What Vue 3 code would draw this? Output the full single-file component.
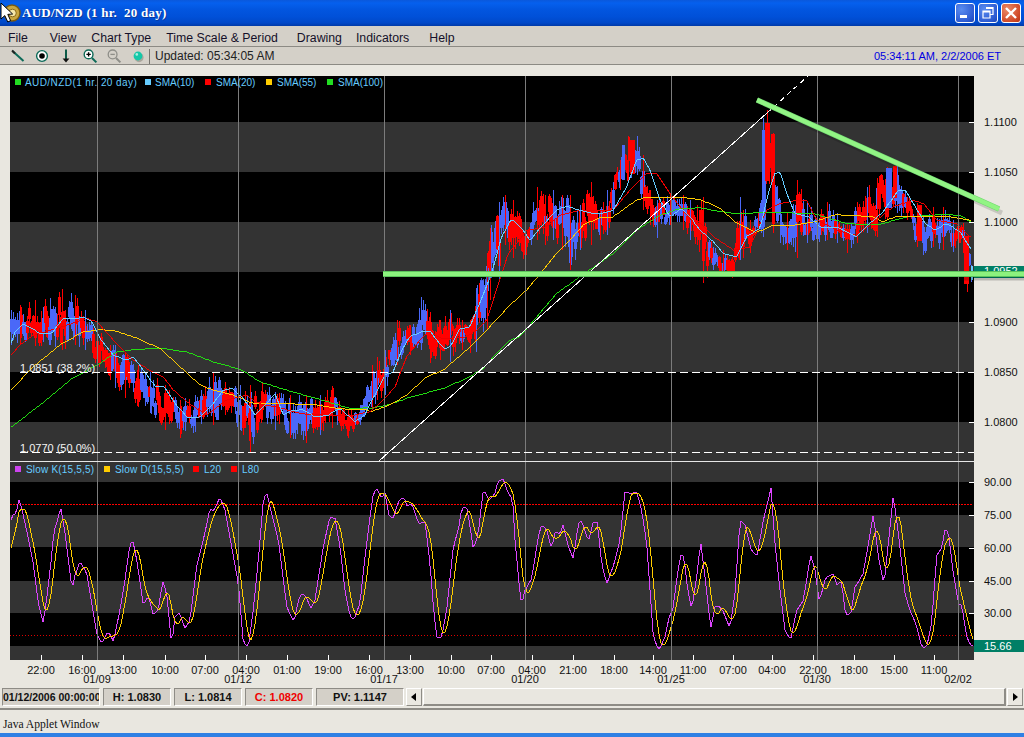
<script setup>
function seg(ox, oy, pts, xmin = -1e9, xmax = 1e9) {
  const out = []
  for (let i = 0; i < pts.length; i += 2) {
    const x = ox + pts[i] / 3
    if (x >= xmin && x <= xmax) out.push([x, oy + pts[i + 1] / 3])
  }
  return out
}
function interp(pts, x) {
  if (x <= pts[0][0]) return pts[0][1]
  for (let i = 1; i < pts.length; i++) {
    if (x <= pts[i][0]) {
      const [a, b] = pts[i - 1]
      const [c, d] = pts[i]
      return b + ((d - b) * (x - a)) / (c - a || 1)
    }
  }
  return pts[pts.length - 1][1]
}
function line(pts, from = 11, to = 972, step = 2) {
  const out = []
  for (let x = from; x <= to; x += step) out.push(x + ',' + Math.round(interp(pts, x)))
  return out.join(' ')
}

const titleText = 'AUD/NZD (1 hr.\u00a0\u00a020 day)'

const sma10 = [
  ...seg(0, 300, [33,130,45,95,68,72,95,85,120,100,155,100,190,55,250,52,275,65,300,115,340,165,380,180,400,170,430,210,465,258,490,258,525,310,560,350,600,350,640,310,670,270,695,265,730,295,765,345,790,320,825,282,850,345,880,330,905,328,945,350,985,345,1020,325,1065,365,1095,345]),
  ...seg(370, 300, [0,310,20,275,45,225,70,215,95,150,120,110,160,92,180,92,200,120,225,147,245,135,270,85,300,80]),
  ...seg(380, 130, [335,430,365,320,395,265,425,295,450,330,480,295,530,240,560,228,600,240,640,250,665,250,700,240,740,170,770,90,790,85,810,120,840,210,870,260,905,235,940,270]),
  ...seg(680, 80, [0,385,20,400,60,450,100,485,130,520,170,530,200,470,240,445,265,340,285,280,300,275,320,340,345,400,385,410,420,440,470,440,530,470,570,430,610,395,655,330,675,330,700,370,735,430,765,450,800,430,840,455,875,510])
]
const sma20 = [
  ...seg(0, 300, [33,165,60,135,100,105,150,90,200,75,260,55,290,65,340,120,400,180,440,205,490,230,520,270,560,305,620,345,680,300,740,285,775,310,830,320,900,340,1000,345,1060,345,1100,335]),
  ...seg(370, 300, [0,335,40,300,75,260,110,170,150,120,175,95,215,115,290,110,320,90,350,60]),
  ...seg(380, 130, [385,370,410,340,440,300,500,290,540,255,600,240,700,240,750,180,800,130,830,130,870,190,900,230,950,290]),
  ...seg(680, 80, [50,420,100,470,160,510,210,500,260,390,300,370,350,360,380,360,410,420,470,450,530,465,590,420,640,380,700,360,730,370,770,420,830,430,870,470])
]
const sma55 = [
  ...seg(0, 300, [33,270,100,200,180,135,250,95,300,88,340,90,400,110,480,145,540,200,600,255,640,270,700,285,760,310,860,310,940,312,1020,325,1100,328]),
  ...seg(370, 300, [0,335,60,315,110,285,170,230,220,210,290,150,350,90,420,15]),
  ...seg(380, 130, [440,480,490,420,530,370,570,330,610,285,660,262,700,260,770,210,800,200,880,200,890,203]),
  ...seg(680, 80, [0,350,60,358,120,385,170,430,230,457,280,435,340,435,400,425,470,403,570,408,610,425,650,408,800,408,870,420])
]
const sma100 = [
  ...seg(0, 300, [33,382,120,315,210,240,300,190,350,155,400,148,480,143,560,155,640,185,720,207,780,245,860,270,950,295,1050,325,1100,322]),
  ...seg(370, 300, [0,325,60,312,130,288,220,265,290,235,340,205,380,160,420,120,450,110]),
  ...seg(380, 130, [530,490,600,440,700,370,770,300,840,255,900,235,960,232]),
  ...seg(680, 80, [100,390,170,400,270,395,400,400,500,430,600,432,680,410,790,402,840,405,870,425])
]

const slowKPts = [
  ...seg(0, 460, [33,180,38,165,48,160,58,115,66,150,80,210,100,310,115,430,130,490,142,400,155,290,162,210,170,190,182,142,195,220,205,300,216,388,225,345,240,305,260,340,275,430,290,520,305,550,320,520,330,520,340,545,360,450,375,360,390,250,400,245,415,330,430,435,445,405,460,465,475,450,488,362,500,400,515,555,525,470,538,458,555,505,570,480,590,320,610,240,630,145,640,155,660,112,675,150,695,260,715,370,730,550,745,560,760,450,775,300,790,120,800,97,815,160,835,240,860,440,882,488,895,420,905,400,918,410,932,445,945,420,970,260,990,170]),
  ...seg(330, 460, [15,175,30,260,45,390,60,470,72,478,90,430,105,290,120,170,130,100,140,85,155,115,165,100,178,170,190,175,205,125,215,115,222,112,232,140,245,130,265,190,285,185,300,310,310,440,320,530,335,530,350,450,370,260,385,210,395,145,410,140,422,210,430,270,445,220,458,100,468,95,475,122,495,100,503,65,520,58,535,100,548,120,555,240,570,400,575,435,585,390,605,355,625,230,635,195,650,210,665,265,677,210,690,225,698,190,715,260,730,295,745,190,755,182,775,245,790,185,802,185,815,310,830,370,850,320,870,240,885,95,905,100,920,95,935,150,950,250,970,530,985,570]),
  ...seg(660, 460, [0,565,15,530,25,480,40,440,50,360,62,285,72,290,82,380,95,450,110,350,122,245,135,350,152,505,165,440,175,435,190,455,210,505,225,400,240,180,255,195,275,275,292,285,310,180,333,85,345,250,360,390,375,510,392,540,410,450,430,420,452,285,465,330,478,425,497,352,520,340,530,375,545,365,557,468,575,455,583,385,610,340,640,162,655,290,672,375,700,105,715,220,735,400,750,450,770,500,785,560,800,560,815,490,830,285,845,265,855,210,865,215,880,340,895,430,905,435,920,530,932,555,940,556])
]
const kYs = []
for (let x = 11; x <= 973; x += 2) kYs.push(Math.round(interp(slowKPts, x)))
const slowK = kYs.map((y, i) => 11 + i * 2 + ',' + y).join(' ')
const slowD = kYs
  .map((_, i) => {
    let s = 0
    for (let j = 0; j < 5; j++) s += i - j >= 0 ? kYs[i - j] : 555
    return 11 + i * 2 + ',' + Math.round(s / 5)
  })
  .join(' ')

const env = [
  [11,310,345],[20,305,345],[35,300,346],[50,298,345],[62,289,350],[75,295,345],[85,310,350],[97,325,365],[110,345,380],[115,345,388],[125,352,398],[138,365,407],[150,372,413],[165,385,430],[180,400,438],[195,395,432],[213,372,425],[225,382,415],[240,385,430],[250,385,452],[262,382,420],[275,392,430],[290,395,438],[306,395,443],[320,395,435],[332,386,428],[348,410,438],[360,405,425],[372,365,410],[377,357,400],[385,350,395],[397,320,365],[410,325,355],[421,297,350],[430,312,363],[440,320,360],[450,310,362],[462,320,350],[470,320,353],[476,288,352],[487,253,330],[490,228,300],[499,202,280],[505,195,245],[513,200,258],[525,225,262],[537,187,240],[545,195,245],[553,190,240],[562,195,250],[570,195,270],[580,205,250],[591,182,245],[600,210,240],[607,190,235],[620,160,190],[628,136,180],[637,136,175],[643,155,210],[650,190,225],[657,200,238],[670,195,225],[683,195,230],[690,200,240],[697,205,245],[703,197,283],[713,247,270],[723,250,277],[732,257,278],[740,197,260],[750,220,253],[758,213,230],[763,118,237],[767,110,180],[773,133,233],[780,200,243],[787,213,250],[797,180,258],[807,203,243],[817,213,250],[827,202,240],[837,213,243],[847,223,253],[857,202,243],[867,187,233],[877,178,237],[887,167,220],[897,165,213],[907,197,220],[917,203,247],[923,217,255],[933,207,247],[943,207,250],[953,220,252],[963,223,253],[967,240,292],[971,265,282]
]
const topPts = env.map((e) => [e[0], e[1]])
const botPts = env.map((e) => [e[0], e[2]])

let seed = 20060202
function rnd() {
  seed = (seed + 0x6d2b79f5) | 0
  let t = Math.imul(seed ^ (seed >>> 15), 1 | seed)
  t = (t + Math.imul(t ^ (t >>> 7), 61 | t)) ^ t
  return ((t ^ (t >>> 14)) >>> 0) / 4294967296
}
const BLUE = '#4a68f8'
const RED = '#ff0000'
const bars = []
let runCol = BLUE
for (let x = 11; x <= 971; x += 2) {
  const t = interp(topPts, x)
  const b = interp(botPts, x)
  const r = b - t
  if (rnd() < 0.3) runCol = runCol === RED ? BLUE : RED
  const mid = t + r * (0.28 + rnd() * 0.44)
  const c1 = mid - r * (0.06 + rnd() * 0.2)
  const c2 = mid + r * (0.06 + rnd() * 0.2)
  const hi = Math.max(t, c1 - r * rnd() * 0.25)
  const lo = Math.min(b, c2 + r * rnd() * 0.25)
  bars.push({ x, hi: Math.round(hi), lo: Math.round(lo), y: Math.round(c1), h: Math.max(2, Math.round(c2 - c1)), col: runCol })
}
const spikes = env.map((e, i) => ({ x: e[0], t: e[1], b: e[2], col: i % 3 ? RED : BLUE }))
// the prominent bars of the reference, placed by hand over the generated ones
const heavy = [
  { x: 762, w: 4, y: 130, h: 90, c: BLUE },
  { x: 765, w: 5, y: 123, h: 58, c: RED },
  { x: 772, w: 3, y: 134, h: 90, c: RED },
  { x: 622, w: 3, y: 145, h: 35, c: BLUE },
  { x: 630, w: 5, y: 140, h: 34, c: RED },
  { x: 886, w: 6, y: 168, h: 40, c: BLUE },
  { x: 893, w: 4, y: 166, h: 32, c: RED },
  { x: 918, w: 4, y: 205, h: 36, c: RED },
  { x: 964, w: 5, y: 236, h: 48, c: RED },
  { x: 971, w: 2, y: 266, h: 14, c: '#66ccff' }
]

const priceBands = [122, 222, 322, 422].map((y) => ({ y, h: Math.min(50, 461 - y) }))
const oscBands = [
  [462, 20],
  [515, 32],
  [581, 32],
  [646, 14]
]
const vlines = [97, 238, 384, 525, 671, 817, 958]
const priceLabels = [
  ['1.1100', 122],
  ['1.1050', 172],
  ['1.1000', 222],
  ['1.0900', 322],
  ['1.0850', 372],
  ['1.0800', 422]
]
const oscLabels = [
  ['90.00', 482],
  ['75.00', 515],
  ['60.00', 548],
  ['45.00', 581],
  ['30.00', 613]
]
const times = [
  ['22:00', 41],['16:00', 82],['13:00', 123],['10:00', 165],['07:00', 205],['04:00', 246],['01:00', 287],['19:00', 328],['16:00', 369],['13:00', 410],['10:00', 451],['07:00', 491],['04:00', 532],['21:00', 573],['18:00', 614],['14:00', 653],['11:00', 693],['07:00', 733],['04:00', 772],['22:00', 813],['18:00', 854],['15:00', 894],['11:00', 934]
]
const dates = [
  ['01/09', 97],['01/12', 238],['01/17', 384],['01/20', 525],['01/25', 671],['01/30', 817],['02/02', 958]
]
const legend = [
  { x: 15, c: '#22dd22', t: 'AUD/NZD(1 hr. 20 day)', tx: 25, wide: true },
  { x: 145, c: '#66ccff', t: 'SMA(10)', tx: 155 },
  { x: 205, c: '#ff0000', t: 'SMA(20)', tx: 216 },
  { x: 266, c: '#ffcc00', t: 'SMA(55)', tx: 277 },
  { x: 327, c: '#22dd22', t: 'SMA(100)', tx: 338 }
]
const oscLegend = [
  { x: 15, c: '#cc44ee', t: 'Slow K(15,5,5)', tx: 26 },
  { x: 104, c: '#ffcc00', t: 'Slow D(15,5,5)', tx: 115 },
  { x: 193, c: '#ff0000', t: 'L20', tx: 204 },
  { x: 231, c: '#ff0000', t: 'L80', tx: 242 }
]
const menus = ['File', 'View', 'Chart Type', 'Time Scale & Period', 'Drawing', 'Indicators', 'Help']
const cells = [
  { t: '01/12/2006 00:00:00', k: 'date' },
  { t: 'H: 1.0830', k: '' },
  { t: 'L: 1.0814', k: '' },
  { t: 'C: 1.0820', k: 'red' },
  { t: 'PV: 1.1147', k: 'pv' }
]
</script>

<template>
  <div class="win">
    <header class="title">
      <svg class="logo" width="22" height="24" viewBox="0 0 22 24">
        <circle cx="12" cy="12" r="8" fill="#c9a640" stroke="#7a5a10" stroke-width="1.5" />
        <circle cx="12.5" cy="12" r="3.8" fill="#f4e6a8" stroke="#8a6a18" />
        <path d="M1 2 L1 18 L4.8 14.6 L7.8 21 L10.6 19.6 L7.8 13.4 L12.6 13 Z" fill="#fff" stroke="#000" stroke-width="1" />
      </svg>
      <span class="title-text">{{ titleText }}</span>
      <div class="winbtns">
        <button class="wb"><svg width="18" height="18" viewBox="0 0 18 18"><rect x="4" y="11" width="7" height="3" fill="#fff" /></svg></button>
        <button class="wb"><svg width="18" height="18" viewBox="0 0 18 18"><path d="M7 3.5h7v7h-3M4 7h7v7H4z M4 7.8h7 M7 4.4h7" fill="none" stroke="#fff" stroke-width="1.2" /></svg></button>
        <button class="wb close"><svg width="18" height="18" viewBox="0 0 18 18"><path d="M4 4 L14 14 M14 4 L4 14" stroke="#fff" stroke-width="2.4" /></svg></button>
      </div>
    </header>

    <nav class="menu">
      <span v-for="m in menus" :key="m" class="mi">{{ m }}</span>
    </nav>

    <div class="tools">
      <span class="tb"><svg width="16" height="16" viewBox="0 0 16 16"><path d="M2.5 3 L13.5 13" stroke="#0c6a58" stroke-width="2" /><path d="M2 2.6 L5 5.4" stroke="#222" stroke-width="2" /></svg></span>
      <span class="tb"><svg width="16" height="16" viewBox="0 0 16 16"><circle cx="8" cy="8" r="5.4" fill="#fff" stroke="#0c6a58" stroke-width="1.4" /><circle cx="8" cy="8" r="2.8" fill="#000" /></svg></span>
      <span class="tb"><svg width="16" height="16" viewBox="0 0 16 16"><path d="M8 1.5V11" stroke="#0c5a48" stroke-width="2" /><path d="M4.6 10.5h6.8L8 14.6z" fill="#111" /></svg></span>
      <span class="tb"><svg width="16" height="16" viewBox="0 0 16 16"><circle cx="6.6" cy="6.4" r="4.4" fill="#fff" stroke="#0c6a58" stroke-width="1.4" /><path d="M4.4 6.4h4.4M6.6 4.2v4.4" stroke="#000" stroke-width="1.4" /><path d="M10 10 L14.4 14.4" stroke="#0c6a58" stroke-width="2" /></svg></span>
      <span class="tb"><svg width="16" height="16" viewBox="0 0 16 16"><circle cx="6.6" cy="6.4" r="4.4" fill="none" stroke="#8e8e88" stroke-width="1.3" /><path d="M4.4 6.4h4.4" stroke="#8e8e88" stroke-width="1.3" /><path d="M10 10 L14.4 14.4" stroke="#8e8e88" stroke-width="2" /></svg></span>
      <span class="tb"><svg width="16" height="16" viewBox="0 0 16 16"><circle cx="9" cy="9.6" r="4.6" fill="#aaa69c" /><circle cx="8" cy="8" r="4.4" fill="#14c8a8" /><circle cx="6.8" cy="6.4" r="1.3" fill="#a8f0e0" /></svg></span>
      <span class="tsep"></span>
      <span class="updated">Updated: 05:34:05 AM</span>
      <span class="clock">05:34:11 AM, 2/2/2006 ET</span>
    </div>

    <svg class="chart" width="1024" height="623" viewBox="0 65 1024 623">
      <rect x="0" y="65" width="1024" height="623" fill="#e9e7e0" />
      <g shape-rendering="crispEdges">
        <rect x="10" y="76" width="964" height="584" fill="#000" />
        <rect v-for="b in priceBands" :key="b.y" x="10" :y="b.y" width="964" :height="b.h" fill="#333" />
        <rect v-for="b in oscBands" :key="b[0]" x="10" :y="b[0]" width="964" :height="b[1]" fill="#333" />

        <g v-for="b in bars" :key="b.x">
          <rect :x="b.x" :y="b.hi" width="1" :height="b.lo - b.hi" :fill="b.col" />
          <rect :x="b.x - 1" :y="b.y" width="3" :height="b.h" :fill="b.col" />
        </g>
        <rect v-for="s in spikes" :key="'s' + s.x" :x="s.x" :y="s.t" width="1" :height="s.b - s.t" :fill="s.col" />
        <rect v-for="h in heavy" :key="'h' + h.x" :x="h.x" :y="h.y" :width="h.w" :height="h.h" :fill="h.c" />

        <polyline class="ln" :points="line(sma100)" stroke="#22dd11" />
        <polyline class="ln" :points="line(sma55)" stroke="#ffcc00" />
        <polyline class="ln" :points="line(sma20)" stroke="#ee0000" />
        <polyline class="ln" :points="line(sma10)" stroke="#66ccff" />

        <line x1="10" y1="504.5" x2="972" y2="504.5" stroke="#ff0000" stroke-dasharray="2 1" />
        <line x1="10" y1="635.5" x2="972" y2="635.5" stroke="#dd0000" stroke-dasharray="1 2" />
        <polyline class="ln" :points="slowK" stroke="#dd44ff" />
        <polyline class="ln" :points="slowD" stroke="#ffcc00" />

        <rect v-for="x in vlines" :key="x" :x="x" y="76" width="1" height="584" fill="#7c7c7c" />
        <rect x="10" y="461" width="964" height="1" fill="#e6e6e6" />

        <line x1="20" y1="372.5" x2="974" y2="372.5" stroke="#fff" stroke-dasharray="8 4" />
        <line x1="20" y1="452.5" x2="974" y2="452.5" stroke="#fff" stroke-dasharray="8 4" />
        <line x1="379" y1="461" x2="767" y2="113" stroke="#fff" />
        <line x1="767" y1="113" x2="808" y2="76" stroke="#fff" stroke-dasharray="5 4" />

        <rect v-for="l in priceLabels" :key="l[0]" x="969" :y="l[1]" width="5" height="1" fill="#fff" />
        <rect v-for="l in oscLabels" :key="l[0]" x="969" :y="l[1]" width="5" height="1" fill="#fff" />
        <rect v-for="t in times" :key="t[1]" :x="t[1]" y="655" width="1" height="5" fill="#fff" />

        <g v-for="l in legend" :key="l.x">
          <rect :x="l.x" y="79" width="6" height="6" :fill="l.c" />
        </g>
        <g v-for="l in oscLegend" :key="l.x">
          <rect :x="l.x" y="466" width="6" height="6" :fill="l.c" />
        </g>

        <rect x="974" y="266" width="50" height="12" fill="#007f66" />
        <rect x="974" y="640" width="50" height="12" fill="#007f66" />
      </g>

      <text v-for="l in legend" :key="'t' + l.x" :x="l.tx" y="86" class="leg" :class="{ wide: l.wide }">{{ l.t }}</text>
      <text v-for="l in oscLegend" :key="'t' + l.x" :x="l.tx" y="473" class="leg osc">{{ l.t }}</text>
      <text x="20" y="372" class="fib">1.0851 (38.2%)</text>
      <text x="20" y="452" class="fib">1.0770 (50.0%)</text>

      <text v-for="l in priceLabels" :key="'p' + l[0]" x="984" :y="l[1] + 4" class="ax">{{ l[0] }}</text>
      <text v-for="l in oscLabels" :key="'o' + l[0]" x="984" :y="l[1] + 4" class="ax">{{ l[0] }}</text>
      <text x="984" y="275" class="ax wh">1.0952</text>
      <text x="984" y="650" class="ax wh">15.66</text>
      <text v-for="t in times" :key="'tt' + t[1]" :x="t[1]" y="674" class="ax mid">{{ t[0] }}</text>
      <text v-for="d in dates" :key="d[0]" :x="d[1]" y="683" class="ax mid">{{ d[0] }}</text>

      <line x1="385" y1="278.5" x2="1024" y2="278.5" stroke="#000" stroke-opacity=".2" stroke-width="4" />
      <line x1="760" y1="104" x2="1002" y2="213" stroke="#000" stroke-opacity=".14" stroke-width="5" />
      <line x1="383" y1="273.5" x2="1024" y2="273.5" stroke="#5cc45c" stroke-width="6" shape-rendering="crispEdges" />
      <line x1="383" y1="273.5" x2="1024" y2="273.5" stroke="#8cf27e" stroke-width="4" shape-rendering="crispEdges" />
      <line x1="757" y1="100" x2="999" y2="209" stroke="#70d870" stroke-width="5.4" />
      <line x1="757" y1="100" x2="999" y2="209" stroke="#92f484" stroke-width="4.2" />
    </svg>

    <div class="status">
      <div class="cells">
        <div v-for="c in cells" :key="c.t" class="cell" :class="c.k">{{ c.t }}</div>
      </div>
      <div class="scroll">
        <span class="arrow"><svg width="6" height="8" viewBox="0 0 6 8"><path d="M5 0V8L0 4z" fill="#000" /></svg></span>
        <span class="thumb"></span>
        <span class="arrow"><svg width="6" height="8" viewBox="0 0 6 8"><path d="M1 0V8L6 4z" fill="#000" /></svg></span>
      </div>
    </div>

    <footer class="applet">Java Applet Window</footer>
    <div class="edge"></div>
  </div>
</template>

<style>
html, body { margin: 0; padding: 0; background: #e9e7e0; }
</style>

<style scoped>
.win {
  width: 1024px;
  height: 737px;
  display: flex;
  flex-direction: column;
  overflow: hidden;
  background: #e9e7e0;
  font-family: "Liberation Sans", Arial, sans-serif;
}
.title {
  height: 26px;
  flex: none;
  display: flex;
  align-items: center;
  box-sizing: border-box;
  background: linear-gradient(180deg, #0a58dc 0%, #0560ee 12%, #0256e0 35%, #0050d8 65%, #0048c8 88%, #003aa8 100%);
}
.logo { flex: none; display: block; }
.title-text {
  color: #fff;
  font: bold 13px "Liberation Serif", serif;
  letter-spacing: 0.25px;
  white-space: pre;
  text-shadow: 1px 1px 0 #0a3aa0;
}
.winbtns { margin-left: auto; margin-right: 3px; display: flex; gap: 3px; }
.wb {
  width: 20px;
  height: 20px;
  padding: 0;
  box-sizing: border-box;
  border: 1px solid #fff;
  border-radius: 3px;
  background: radial-gradient(circle at 30% 30%, #5a8cf0, #2a58d0 75%, #1c44b0);
  display: flex;
  align-items: center;
  justify-content: center;
}
.wb.close { background: radial-gradient(circle at 30% 30%, #ec8a68, #d04a28 70%, #b83416); }
.menu {
  height: 17px;
  padding-top: 3px;
  flex: none;
  display: flex;
  align-items: center;
  padding-left: 8px;
  background: #d4d0c8;
  border-bottom: 1px solid #8c8a84;
  font-size: 12.3px;
  color: #14102a;
}
.mi:nth-child(2) { margin-left: 22px; }
.mi:nth-child(3) { margin-left: 15px; }
.mi:nth-child(4) { margin-left: 15px; }
.mi:nth-child(5) { margin-left: 19px; }
.mi:nth-child(6) { margin-left: 14px; }
.mi:nth-child(7) { margin-left: 20px; }
.tools {
  height: 16px;
  padding-top: 1px;
  flex: none;
  display: flex;
  align-items: center;
  padding-left: 6px;
  background: #d4d0c8;
  border-bottom: 1px solid #8c8a84;
  font-size: 12px;
}
.tb { width: 24px; height: 16px; margin-top: -1px; display: flex; justify-content: center; flex: none; }
.tsep { width: 1px; height: 15px; background: #77756f; margin-left: -1px; margin-right: 5px; flex: none; }
.updated { color: #222; }
.clock { margin-left: auto; margin-right: 23px; color: #0000e0; font-size: 11px; }
.chart { display: block; flex: none; }
.ln { fill: none; stroke-width: 1; }
.leg { font: 10px "Liberation Sans", Arial, sans-serif; fill: #66ccff; }
.leg.wide { letter-spacing: 0.42px; }
.leg.osc { letter-spacing: 0.2px; }
.fib { font: 11px "Liberation Sans", Arial, sans-serif; fill: #f4f4f4; }
.ax { font: 11px "Liberation Sans", Arial, sans-serif; fill: #111; }
.ax.wh { fill: #fff; }
.ax.mid { text-anchor: middle; }
.status { height: 18px; flex: none; display: flex; padding-left: 2px; }
.cells { display: flex; gap: 3px; width: 402px; flex: none; }
.cell {
  height: 18px;
  width: 68px;
  box-sizing: border-box;
  flex: none;
  background: #d4d0c8;
  border: 1px solid #fff;
  border-top-color: #8e8c86;
  border-left-color: #8e8c86;
  font-size: 11px;
  font-weight: bold;
  line-height: 16px;
  text-align: center;
  color: #111;
  overflow: hidden;
  white-space: nowrap;
}
.cell.date { width: 98px; text-align: left; font-size: 10.5px; }
.cell.pv { width: 88px; }
.cell.red { color: #f00000; }
.scroll { margin-left: 2px; flex: 1; margin-right: 1px; display: flex; }
.arrow {
  width: 16px;
  height: 18px;
  box-sizing: border-box;
  flex: none;
  background: #e9e7e0;
  border: 1px solid #fff;
  border-right-color: #8e8c86;
  border-bottom-color: #8e8c86;
  display: flex;
  align-items: center;
  justify-content: center;
}
.thumb {
  flex: 1;
  background: #e9e7e0;
  border: 1px solid #fff;
  border-right: 2px solid #8e8c86;
  border-bottom: 2px solid #8e8c86;
  box-sizing: border-box;
  margin: 0 1px;
}
.applet {
  margin-top: 2px;
  height: 25px;
  flex: none;
  box-sizing: border-box;
  border-top: 2px solid #8e8c86;
  padding: 8px 0 0 3px;
  font: 11.6px "Liberation Serif", serif;
  line-height: 14px;
  color: #111;
  background: #e9e7e0;
}
.edge { flex: 1; background: #2f80e4; }
</style>
